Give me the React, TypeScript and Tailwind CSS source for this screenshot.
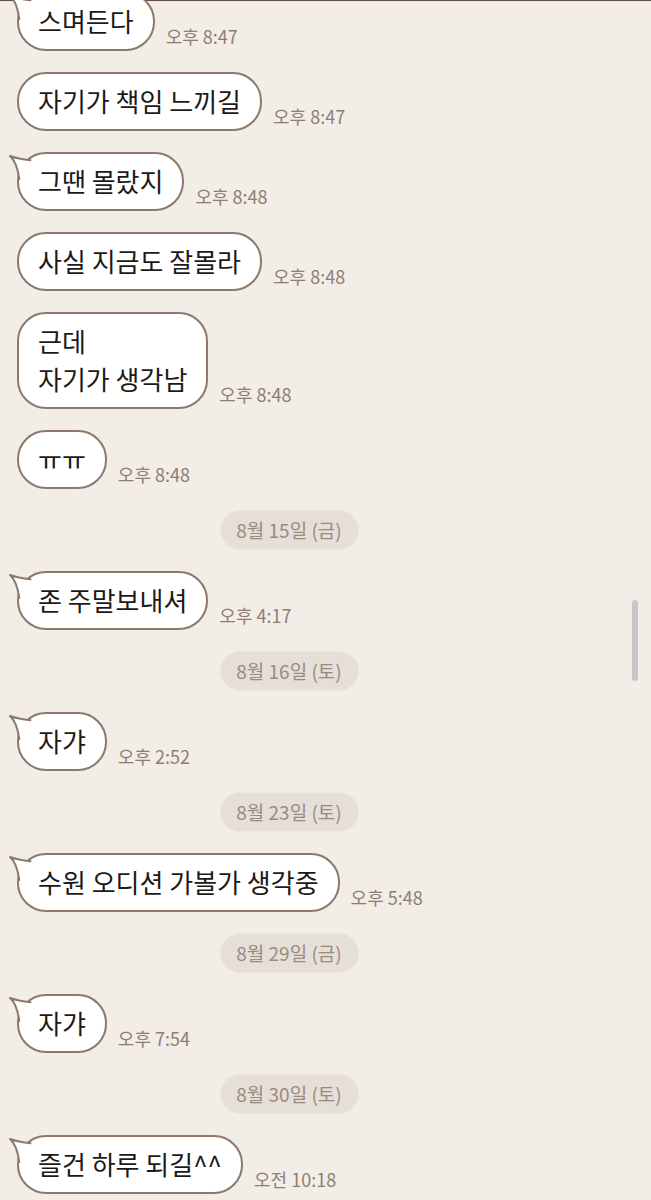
import React from "react";

type Item =
  | { kind: "msg"; lines: string[]; time: string; tail?: boolean }
  | { kind: "date"; label: string };

const ITEMS: Item[] = [
  { kind: "msg", lines: ["스며든다"], time: "오후 8:47", tail: true },
  { kind: "msg", lines: ["자기가 책임 느끼길"], time: "오후 8:47" },
  { kind: "msg", lines: ["그땐 몰랐지"], time: "오후 8:48", tail: true },
  { kind: "msg", lines: ["사실 지금도 잘몰라"], time: "오후 8:48" },
  { kind: "msg", lines: ["근데", "자기가 생각남"], time: "오후 8:48" },
  { kind: "msg", lines: ["ㅠㅠ"], time: "오후 8:48" },
  { kind: "date", label: "8월 15일 (금)" },
  { kind: "msg", lines: ["존 주말보내셔"], time: "오후 4:17", tail: true },
  { kind: "date", label: "8월 16일 (토)" },
  { kind: "msg", lines: ["자갸"], time: "오후 2:52", tail: true },
  { kind: "date", label: "8월 23일 (토)" },
  { kind: "msg", lines: ["수원 오디션 가볼가 생각중"], time: "오후 5:48", tail: true },
  { kind: "date", label: "8월 29일 (금)" },
  { kind: "msg", lines: ["자갸"], time: "오후 7:54", tail: true },
  { kind: "date", label: "8월 30일 (토)" },
  { kind: "msg", lines: ["즐건 하루 되길^^"], time: "오전 10:18", tail: true },
];

// little speech tail at the bubble's top-left corner
function Tail() {
  return (
    <svg
      className="absolute left-[-11px] top-[-1px] pointer-events-none"
      width="30"
      height="32"
      viewBox="0 0 30 32"
    >
      <path d="M25,11 L22,7 Q10,6 2,3 Q9,9 11.5,26 L15,27 Z" fill="#ffffff" />
      <path
        d="M22.5,7.2 Q10,6 2,3 Q9,9 11.3,26"
        fill="none"
        stroke="#8d796c"
        strokeWidth="2"
        strokeLinecap="round"
        strokeLinejoin="round"
      />
    </svg>
  );
}

function Message({ lines, time, tail }: { lines: string[]; time: string; tail?: boolean }) {
  return (
    <div className="flex items-end pl-[17px]">
      <div className="relative bg-white border-2 border-[#8d796c] rounded-[29px] px-[19px] pt-[8px] pb-[9px] text-[26px] leading-[38px] text-[#1c1a19]">
        {tail && <Tail />}
        {lines.map((l, i) => (
          <div key={i} className="whitespace-nowrap">{l}</div>
        ))}
      </div>
      <span className="ml-[11px] mb-[3px] text-[18px] leading-[24px] text-[#8f7d71] whitespace-nowrap">
        {time}
      </span>
    </div>
  );
}

function DatePill({ label }: { label: string }) {
  return (
    <div className="w-[578px] flex justify-center">
      <div className="h-[40px] w-[139px] flex items-center justify-center rounded-full bg-[#e6dfd7] border border-[#ece6df] text-[19px] text-[#998b80]">
        {label}
      </div>
    </div>
  );
}

export default function App() {
  return (
    <div
      className="relative w-[651px] h-[1200px] bg-[#f2ede7] border-t border-[#5e4d44]"
      style={{ fontFamily: '"Noto Sans CJK KR", "Noto Sans", sans-serif' }}
    >
      <div className="h-px bg-[#f3e0dc]" />
      <div className="flex flex-col gap-[21px] mt-[-10px]">
        {ITEMS.map((it, i) =>
          it.kind === "msg" ? (
            <Message key={i} lines={it.lines} time={it.time} tail={it.tail} />
          ) : (
            <DatePill key={i} label={it.label} />
          )
        )}
      </div>
      {/* scrollbar thumb */}
      <div className="absolute left-[632px] top-[599px] w-[6px] h-[81px] rounded-full bg-[#c6c6cd]" />
    </div>
  );
}
